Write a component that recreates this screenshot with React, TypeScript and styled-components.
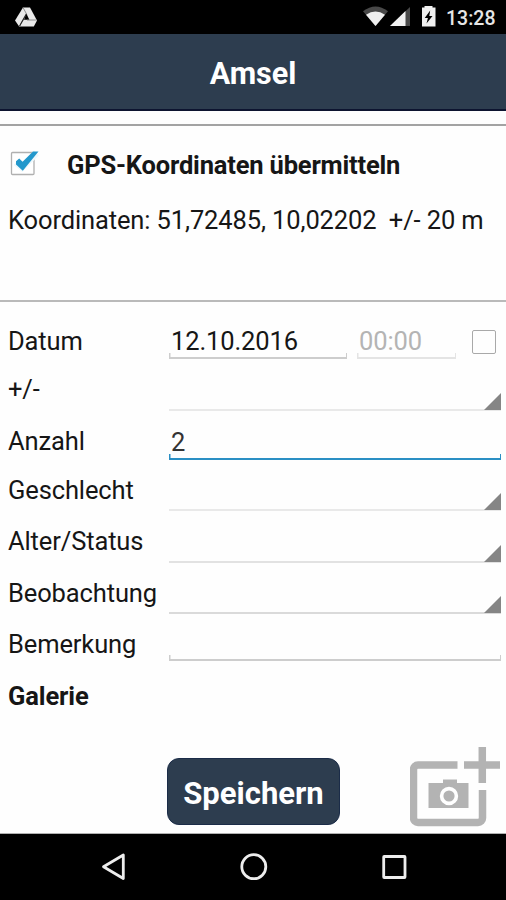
import React from "react";
import styled, { createGlobalStyle } from "styled-components";

const GlobalStyle = createGlobalStyle`
  *, *::before, *::after { box-sizing: border-box; }
  body { margin: 0; background: #fefefe; }
`;

const Screen = styled.div`
  display: flex;
  flex-direction: column;
  width: 506px;
  height: 900px;
  overflow: hidden;
  background: #fefefe;
  color: #161616;
  font-family: Roboto, "Liberation Sans", sans-serif;
  font-size: 25.5px;
  line-height: 30px;
  letter-spacing: -0.12px;
`;

const StatusBar = styled.header`
  display: flex;
  flex: none;
  align-items: center;
  height: 34px;
  padding: 0 11px 0 15px;
  background: #000;
`;

const StatusIcons = styled.div`
  display: flex;
  align-items: center;
  margin-left: auto;
`;

const Clock = styled.span`
  width: 49px;
  margin-left: 10px;
  margin-top: 3px;
  color: #e6e6e6;
  font-size: 19.5px;
  font-weight: 500;
  line-height: 24px;
  letter-spacing: 0;
  white-space: nowrap;
`;

const TitleBar = styled.h1`
  flex: none;
  height: 77px;
  margin: 0;
  padding-top: 25px;
  border-bottom: 2px solid #0d1430;
  background: #2d3d4f;
  color: #fff;
  font-size: 30.5px;
  font-weight: 700;
  line-height: 30px;
  letter-spacing: 0;
  text-align: center;
`;

const GpsPanel = styled.section`
  flex: none;
  height: 178px;
  margin-top: 13px;
  padding: 24px 8px 0;
  border-top: 2px solid #a3a3a3;
  border-bottom: 2px solid #bababa;
`;

const GpsToggle = styled.div`
  display: flex;
  align-items: flex-start;
`;

const ToggleLabel = styled.strong`
  margin-left: 26px;
  font-size: 25.5px;
  font-weight: 700;
  letter-spacing: -0.18px;
  white-space: nowrap;
`;

const Coordinates = styled.p`
  margin: 25px 0 0;
  white-space: pre;
`;

const Form = styled.form`
  display: flex;
  flex: 1;
  flex-direction: column;
  padding: 0 5px 0 8px;
`;

const Row = styled.div<{ $height: number; $labelTop?: number }>`
  display: flex;
  flex: none;
  align-items: flex-end;
  height: ${(p) => p.$height}px;

  & > label {
    flex: none;
    align-self: flex-start;
    width: 161px;
    margin-top: ${(p) => p.$labelTop ?? 15}px;
    white-space: nowrap;
  }
`;

const TextField = styled.div<{ $width?: number; $line?: string; $ink?: string }>`
  flex: ${(p) => (p.$width ? "none" : "1")};
  width: ${(p) => (p.$width ? `${p.$width}px` : "auto")};
  height: 33px;
  padding-left: 2px;
  border-bottom: 2px solid ${(p) => p.$line ?? "#cdcdcd"};
  background:
    linear-gradient(${(p) => p.$line ?? "#cdcdcd"} 0 0) left bottom / 1.5px 4px no-repeat,
    linear-gradient(${(p) => p.$line ?? "#cdcdcd"} 0 0) right bottom / 1.5px 4px no-repeat;
  color: ${(p) => p.$ink ?? "inherit"};
  white-space: nowrap;
`;

const TimeGap = styled.div`
  flex: none;
  width: 10px;
`;

const EmptyBox = styled.div`
  flex: none;
  width: 24px;
  height: 24px;
  margin: 0 5px 5px auto;
  border: 1.5px solid #a9a9a9;
  border-radius: 2px;
`;

const Spinner = styled.div<{ $line?: string }>`
  display: flex;
  flex: 1;
  justify-content: flex-end;
  align-items: flex-end;
  height: 18px;
  background: linear-gradient(${(p) => p.$line ?? "#e2e2e2"} 0 0) left bottom / 100% 2px no-repeat;
`;

const Corner = styled.svg`
  display: block;
  width: 17px;
  height: 17px;
  margin-bottom: 1px;
`;

const Gallery = styled.h2`
  margin: 20px 0 0;
  font-size: 25.5px;
  font-weight: 700;
  line-height: 30px;
`;

const Actions = styled.div`
  display: grid;
  flex: none;
  grid-template-columns: 167px 173px 1fr;
  align-items: start;
  height: 88px;
  border-bottom: 1px solid #b0b0b0;
`;

const SaveButton = styled.button`
  grid-column: 2;
  height: 67px;
  margin: 12px 0 0;
  padding: 4px 0 0;
  border: 1px solid #1b2c48;
  border-radius: 12px;
  background: #2d3d4f;
  color: #fff;
  font-family: inherit;
  font-size: 31px;
  font-weight: 700;
  line-height: 34px;
`;

const AddPhoto = styled.svg`
  display: block;
  width: 90px;
  height: 80px;
  margin: 1px 0 0 70px;
`;

const NavBar = styled.nav`
  display: flex;
  flex: none;
  align-items: center;
  justify-content: space-between;
  height: 66px;
  padding: 0 98px 0 100px;
  background: #000;
`;

const DriveIcon = () => (
  <svg width="23" height="22" viewBox="0 0 23 22">
    <path d="M8 1.5h7l7 13-3.2 6H4.2L0 14.5z" fill="#e9e9e9" />
    <path d="M11.3 7.6l3.1 6.2H9z" fill="#000" />
    <path d="M8 1.5l3.8 7M9.3 12L4.4 20.3M12 14h9.6" stroke="#777" strokeWidth="0.8" fill="none" />
    <path d="M11.3 8L4.6 20" stroke="#222" strokeWidth="1.1" fill="none" />
  </svg>
);

const SystemIcons = () => (
  <svg width="74" height="24" viewBox="362 6 74 24">
    <path d="M363 12.2q12.5-9.6 25 0L375.5 27z" fill="#484848" />
    <path d="M366 15.7q9.5-6.5 19 0L375.5 27z" fill="#f0f0f0" />
    <path d="M390 27l20-19v19z" fill="#484848" />
    <path d="M390 27l15.5-15v15z" fill="#f0f0f0" />
    <path d="M422 8.5h2.5V7h8v1.5h3V27.5H422z" fill="#f0f0f0" />
    <path d="M430.2 11.5l-5.5 7.5h3.2l-1.4 5.5 6-7.5h-3.2z" fill="#000" />
  </svg>
);

const CheckedBox = () => (
  <svg width="33" height="30" viewBox="8 150 33 30">
    <rect x="11.5" y="152.5" width="22.5" height="22" rx="1" fill="#fff" stroke="#b0b0b0" strokeWidth="1.3" />
    <path d="M16 162.2l6 5L36.5 153" fill="none" stroke="#eef8fc" strokeWidth="7" />
    <path d="M16 161.2l3.2-2.8 3.4 3.4L33 151.5h5.5L22.8 170.8 16 164.6z" fill="#2398cc" />
  </svg>
);

const SpinnerField = ({ line }: { line?: string }) => (
  <Spinner $line={line}>
    <Corner viewBox="0 0 17 17">
      <path d="M0 17L17 0v17z" fill="#858585" />
    </Corner>
  </Spinner>
);

export default function App() {
  return (
    <>
      <GlobalStyle />
      <Screen>
        <StatusBar>
          <DriveIcon />
          <StatusIcons>
            <SystemIcons />
            <Clock>13:28</Clock>
          </StatusIcons>
        </StatusBar>
        <TitleBar>Amsel</TitleBar>
        <GpsPanel>
          <GpsToggle>
            <CheckedBox />
            <ToggleLabel>GPS-Koordinaten übermitteln</ToggleLabel>
          </GpsToggle>
          <Coordinates>{"Koordinaten: 51,72485, 10,02202  +/- 20 m"}</Coordinates>
        </GpsPanel>
        <Form>
          <Row $height={57} $labelTop={24}>
            <label>Datum</label>
            <TextField $width={178}>12.10.2016</TextField>
            <TimeGap />
            <TextField $width={99} $line="#e4e4e4" $ink="#b4b4b4">00:00</TextField>
            <EmptyBox />
          </Row>
          <Row $height={52}>
            <label>+/-</label>
            <SpinnerField line="#e9e9e9" />
          </Row>
          <Row $height={49}>
            <label>Anzahl</label>
            <TextField $line="#2a8fc4" $ink="#333">2</TextField>
          </Row>
          <Row $height={51}>
            <label>Geschlecht</label>
            <SpinnerField line="#e9e9e9" />
          </Row>
          <Row $height={52}>
            <label>Alter/Status</label>
            <SpinnerField />
          </Row>
          <Row $height={51}>
            <label>Beobachtung</label>
            <SpinnerField line="#dadada" />
          </Row>
          <Row $height={47}>
            <label>Bemerkung</label>
            <TextField />
          </Row>
          <Gallery>Galerie</Gallery>
        </Form>
        <Actions>
          <SaveButton type="button">Speichern</SaveButton>
          <AddPhoto viewBox="410 747 90 80">
            <path
              d="M457.5 765H418a4.5 4.5 0 0 0-4.5 4.5V818a4.5 4.5 0 0 0 4.5 4.5h60a4.5 4.5 0 0 0 4.5-4.5v-28"
              fill="none"
              stroke="#b3b3b3"
              strokeWidth="7.5"
            />
            <path d="M482.3 747v36M464 765h36" stroke="#b3b3b3" strokeWidth="7.5" />
            <path d="M428.5 783H443v-3.5h14v3.5h11.5v25h-40z" fill="#b3b3b3" />
            <circle cx="449" cy="796" r="7.4" fill="#b3b3b3" stroke="#fff" strokeWidth="3.6" />
          </AddPhoto>
        </Actions>
        <NavBar>
          <svg width="26" height="30" viewBox="100 852 26 30">
            <path d="M103.5 866.7L123.3 855v23.5z" fill="none" stroke="#ededed" strokeWidth="2.8" strokeLinejoin="round" />
          </svg>
          <svg width="30" height="30" viewBox="238 852 30 30">
            <circle cx="253.8" cy="866.7" r="12" fill="none" stroke="#ededed" strokeWidth="2.8" />
          </svg>
          <svg width="28" height="30" viewBox="380 852 28 30">
            <rect x="383.7" y="856.5" width="21.3" height="21" rx="0.5" fill="none" stroke="#ededed" strokeWidth="2.8" />
          </svg>
        </NavBar>
      </Screen>
    </>
  );
}
